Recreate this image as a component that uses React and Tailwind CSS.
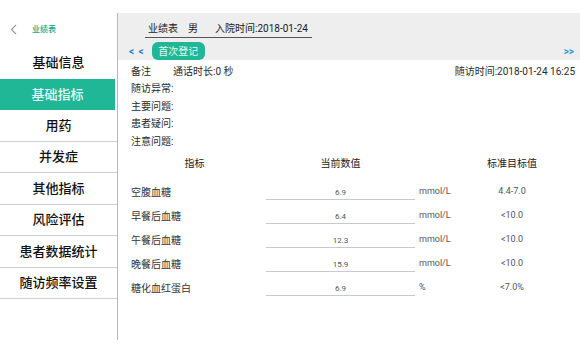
import React from 'react';

const menu = ['基础信息', '基础指标', '用药', '并发症', '其他指标', '风险评估', '患者数据统计', '随访频率设置'];

const notes = ['随访异常:', '主要问题:', '患者疑问:', '注意问题:'];

const rows = [
    { name: '空腹血糖', value: '6.9', unit: 'mmol/L', target: '4.4-7.0' },
    { name: '早餐后血糖', value: '6.4', unit: 'mmol/L', target: '<10.0' },
    { name: '午餐后血糖', value: '12.3', unit: 'mmol/L', target: '<10.0' },
    { name: '晚餐后血糖', value: '15.9', unit: 'mmol/L', target: '<10.0' },
    { name: '糖化血红蛋白', value: '6.9', unit: '%', target: '<7.0%' },
];

export default function App() {
    return (
        <div
            className="w-[580px] h-[364px] bg-white pt-[13px] overflow-hidden"
            style={{ fontFamily: 'Roboto, "Noto Sans CJK SC", sans-serif' }}
        >
            <div className="flex h-[327px]">
                {/* Sidebar */}
                <div className="w-[118px] shrink-0 border-r border-[#b9b9b9] flex flex-col">
                    <div className="h-[34px] pt-[11px] pl-[10px] flex items-start">
                        <div className="flex items-center h-[11px]">
                            <svg width="7" height="11" viewBox="0 0 7 11" fill="none">
                                <path d="M6 1 L1.5 5.5 L6 10" stroke="#9a9a9a" strokeWidth="1.1" />
                            </svg>
                            <span className="ml-[15px] text-[8px] leading-none text-[#17a585] font-medium">业绩表</span>
                        </div>
                    </div>
                    {menu.map((item, i) => (
                        <div
                            key={item}
                            className={
                                i === 1
                                    ? 'h-[31.5px] flex items-center justify-center bg-[#20b797] text-[#e6faf5] text-[13px] font-medium mr-[2px]'
                                    : i === 0
                                    ? 'h-[31.5px] flex items-center justify-center text-[#111] text-[13px] font-medium'
                                    : 'h-[31.5px] flex items-center justify-center text-[#111] text-[13px] font-medium border-b border-[#cfcfcf]'
                            }
                        >
                            {item}
                        </div>
                    ))}
                </div>

                {/* Main panel */}
                <div className="flex-1 flex flex-col">
                    <div className="h-[47px] shrink-0 bg-[#eeeeee] flex flex-col">
                        <div className="mt-[9px] ml-[27px] w-[167px] border-b border-[#555] pb-[1px] pl-[3px] flex items-center whitespace-nowrap text-[10px] leading-[14px] text-[#1a1a1a]">
                            <span>业绩表</span>
                            <span className="ml-[10px]">男</span>
                            <span className="ml-[17px]">入院时间:2018-01-24</span>
                        </div>
                        <div className="mt-auto h-[18px] flex items-center pl-[11px] pr-[6px]">
                            <span className="text-[10px] font-bold text-[#2d7fc6] tracking-[1px]">&lt; &lt;</span>
                            <div className="ml-[7px] w-[53px] h-[18px] rounded-[6px] bg-[#20b797] flex items-center justify-center text-[10px] text-[#e6faf5]">
                                首次登记
                            </div>
                            <span className="ml-auto text-[10px] font-bold text-[#2d9ad6]">&gt;&gt;</span>
                        </div>
                    </div>

                    <div className="pl-[13px] pr-[5px] pt-[2.5px] text-[10px] text-[#2a2a2a]">
                        <div className="h-[17.5px] flex items-center whitespace-nowrap">
                            <span>备注</span>
                            <span className="ml-[22px]">通话时长:0 秒</span>
                            <span className="ml-auto">随访时间:2018-01-24 16:25</span>
                        </div>
                        {notes.map((n) => (
                            <div key={n} className="h-[17.5px] flex items-center">
                                {n}
                            </div>
                        ))}

                        <div className="h-[26px] flex items-center text-[10px] text-[#222]">
                            <div className="w-[135px] text-center pr-[8px]">指标</div>
                            <div className="w-[149px] text-center">当前数值</div>
                            <div className="w-[56px]" />
                            <div className="w-[82px] text-center">标准目标值</div>
                        </div>
                        <div className="h-[4px]" />

                        {rows.map((r) => (
                            <div key={r.name} className="h-[24px] flex items-center">
                                <div className="w-[135px] text-[10px] text-[#333]">{r.name}</div>
                                <div className="w-[149px] h-[14px] mt-[2px] border-b border-[#c9c9c9] flex items-center justify-center text-[8px] text-[#555]">
                                    {r.value}
                                </div>
                                <div className="w-[56px] pl-[4px] text-[9px] text-[#555]">{r.unit}</div>
                                <div className="w-[82px] text-center text-[9px] text-[#555]">{r.target}</div>
                            </div>
                        ))}
                    </div>
                </div>
            </div>
        </div>
    );
}
